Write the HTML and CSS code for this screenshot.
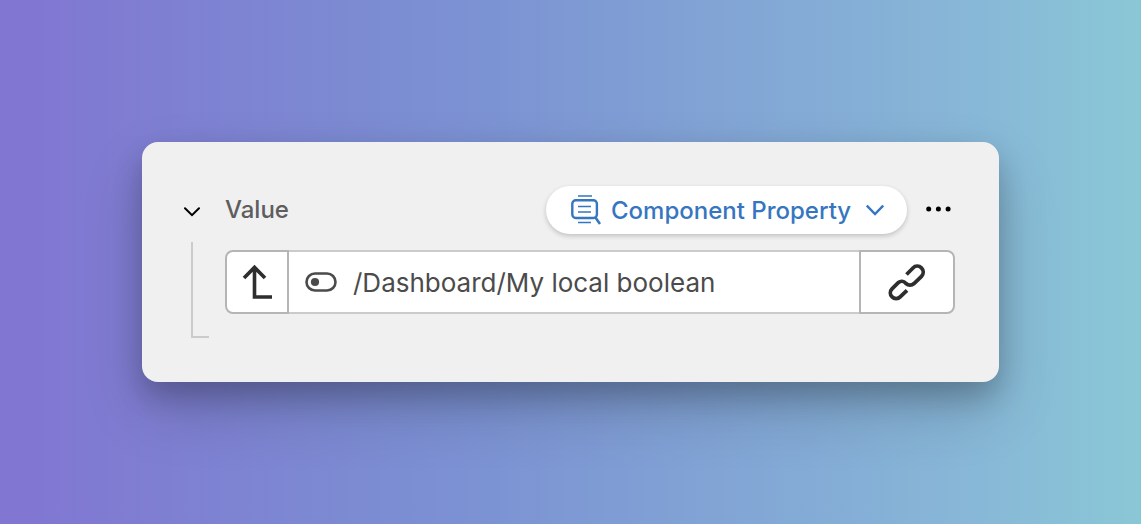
FILE: index.html
```html
<!DOCTYPE html>
<html lang="en">
<head>
<meta charset="utf-8">
<title>Value binding</title>
<link rel="stylesheet" href="styles.css">
</head>
<body>
<main class="card">
  <header class="header">
    <button class="icon-button toggle" type="button" aria-label="Collapse value" aria-expanded="true">
      <svg width="16" height="10" viewBox="0 0 16 10" fill="none" stroke="currentColor" stroke-width="2" stroke-linecap="round"><path d="M1 1.2 8 8.2 15 1.2"/></svg>
    </button>
    <label class="title" for="path">Value</label>
    <div class="pill">
      <svg class="pill-icon" width="30" height="30" viewBox="0 0 30 30" fill="none" stroke="currentColor">
        <rect x="1.3" y="5.2" width="24.6" height="17.8" rx="3.5" stroke-width="2.4"/>
        <path d="M7 1H21M7 11.5H20M7 17H20M7 27.5H20" stroke-width="1.6"/>
        <path d="M24.5 22.5 29 29" stroke-width="2.6"/>
      </svg>
      <select class="source" aria-label="Binding type"><option>Component Property</option></select>
      <svg class="caret" width="18" height="12" viewBox="0 0 18 12" fill="none" stroke="currentColor" stroke-width="2.4"><path d="M.8 1.6 9 10.1 17.2 1.6"/></svg>
    </div>
    <button class="icon-button more" type="button" aria-label="More options">
      <svg width="26" height="6" viewBox="0 0 26 6" fill="currentColor"><circle cx="2.7" cy="3" r="2.5"/><circle cx="12.4" cy="3" r="2.5"/><circle cx="22.1" cy="3" r="2.5"/></svg>
    </button>
  </header>
  <div class="body">
    <div class="branch"></div>
    <div class="field">
      <button class="field-button up" type="button" aria-label="Go to parent">
        <svg width="32" height="36" viewBox="0 0 32 36" fill="none" stroke="currentColor" stroke-width="3.6"><path d="M3 14 13.5 3.4 24 14M13.5 3V33H31"/></svg>
      </button>
      <div class="value">
        <svg width="32" height="20" viewBox="0 0 32 20" fill="none" stroke="currentColor" stroke-width="2.6"><rect x="1.5" y="1.5" width="29" height="17" rx="8.5"/><circle cx="10" cy="10" r="4.1" fill="currentColor" stroke="none"/></svg>
        <input class="path" id="path" type="text" value="/Dashboard/My local boolean" spellcheck="false">
      </div>
      <button class="field-button link" type="button" aria-label="Edit link">
        <svg width="38" height="38" viewBox="0 0 38 38" fill="none" stroke="currentColor" stroke-width="3.8"><path d="M18.5 11.5 25 5A5.8 5.8 0 0 1 33.5 13.3L26 20.5A6 6 0 0 1 18 20.5L17.5 20A5 5 0 0 0 10.5 19.5L4 25.8A5.6 5.6 0 0 0 12.2 33.8L19 27.3"/></svg>
      </button>
    </div>
  </div>
</main>
</body>
</html>
```
FILE: styles.css
```css
* {
  box-sizing: border-box;
}

body {
  margin: 0;
  min-height: 100vh;
  padding: 24px 142px;
  display: flex;
  align-items: center;
  background: linear-gradient(90deg, #8176d2 2%, #7c8ad2 30%, #7c93d3 43%, #88b8d7 86%, #8ac7d6 100%);
  color: #4b4b4b;
  font-family: Inter, "Liberation Sans", sans-serif;
  font-size: 24px;
}

.card {
  flex: 1;
  min-width: 0;
  padding: 44px 44px 44px 42px;
  border-radius: 16px;
  background: #f0f0f0;
  box-shadow: 0 28px 60px rgba(0, 0, 0, 0.18), 0 14px 28px rgba(0, 0, 0, 0.2);
}

.header {
  display: flex;
  align-items: center;
  min-height: 48px;
}

button {
  padding: 0;
  border: 0;
  font: inherit;
  cursor: pointer;
}

svg {
  display: block;
  flex: none;
}

.icon-button {
  display: flex;
  align-items: center;
  height: 48px;
  background: none;
  color: #000;
}

.toggle {
  width: 41px;
  padding-top: 3px;
}

.title {
  flex: 1;
  padding-bottom: 2px;
  color: #5e5e5e;
  font-weight: 500;
}

.pill {
  display: flex;
  align-items: center;
  height: 48px;
  padding: 0 23px 0 25px;
  border-radius: 24px;
  background: #fff;
  color: #3676c0;
  box-shadow: 0 2px 5px rgba(0, 0, 0, 0.2);
}

.source {
  appearance: none;
  margin: 0 14px 0 10px;
  padding: 2px 0 0;
  border: 0;
  background: none;
  color: inherit;
  font: inherit;
  font-weight: 500;
  line-height: 46px;
}

.more {
  justify-content: center;
  width: 32px;
  margin-left: 16px;
  padding-bottom: 2px;
}

.body {
  display: flex;
  margin-top: 8px;
  padding-left: 7px;
}

.branch {
  width: 18px;
  margin-right: 16px;
  border: solid #cbcbcb;
  border-width: 0 0 2px 2px;
}

.field {
  display: flex;
  flex: 1;
  min-width: 0;
  height: 64px;
  margin: 8px 0 24px;
}

.field-button {
  display: flex;
  align-items: center;
  justify-content: center;
  border: 2px solid #b5b5b5;
  background: #fff;
  color: #2e2e2e;
}

.up {
  width: 64px;
  border-radius: 8px 0 0 8px;
}

.link {
  width: 96px;
  border-radius: 0 8px 8px 0;
}

.value {
  display: flex;
  flex: 1;
  align-items: center;
  gap: 16px;
  min-width: 0;
  padding: 0 16px;
  border: solid #cbcbcb;
  border-width: 2px 0;
  background: #fff;
}

.path {
  flex: 1;
  min-width: 0;
  padding: 0;
  border: 0;
  background: none;
  color: inherit;
  font: inherit;
  font-size: 26px;
}
```
